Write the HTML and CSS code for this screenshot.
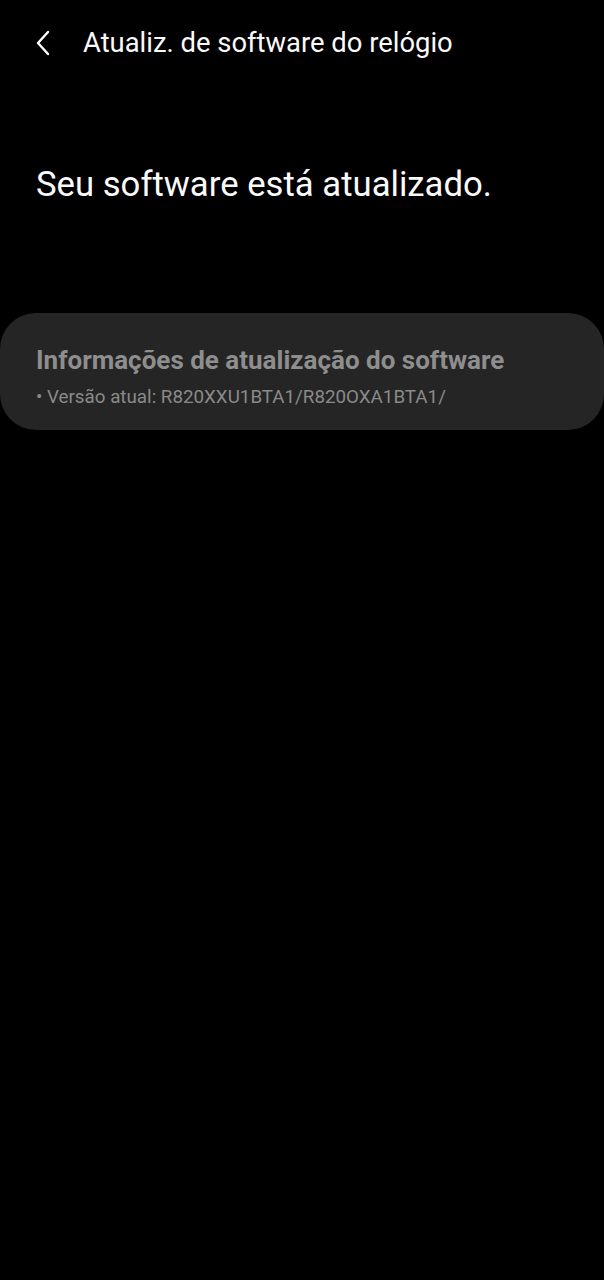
FILE: index.html
```html
<!DOCTYPE html>
<html lang="pt">
<head>
  <meta charset="UTF-8">
  <title>Atualiz. de software do relógio</title>
  <meta name="viewport" content="width=device-width, initial-scale=1">
  <link rel="stylesheet" href="styles.css">
</head>
<body>

  <div class="header">
    <button class="back" aria-label="Voltar">
      <svg width="16" height="26" viewBox="0 0 16 26">
        <path d="M13 2 L3 13 L13 24" fill="none" stroke="#fff" stroke-width="2.4" stroke-linecap="round" stroke-linejoin="round"/>
      </svg>
    </button>
    <h1>Atualiz. de software do relógio</h1>
  </div>

  <p class="status">Seu software está atualizado.</p>

  <div class="card">
    <h2>Informações de atualização do software</h2>
    <p>• Versão atual: R820XXU1BTA1/R820OXA1BTA1/</p>
  </div>

</body>
</html>
```

FILE: styles.css
```css
body {
  margin: 0;
  background-color: #000;
  color: #fafafa;
  font-family: Roboto, "Noto Sans", sans-serif;
}

.header {
  display: flex;
  align-items: center;
  height: 86px;
  padding-left: 35px;
}

.back {
  background: none;
  border: none;
  padding: 0;
  width: 28px;
  height: 28px;
  display: flex;
  align-items: center;
  margin-right: 20px;
}

.header h1 {
  margin: 0;
  font-size: 27.4px;
  font-weight: 400;
}

.status {
  margin: 78px 0 0 36px;
  font-size: 34.7px;
  font-weight: 400;
}

.card {
  margin-top: 109px;
  background-color: #252525;
  border-radius: 36px;
  padding: 31px 36px 21px;
}

.card h2 {
  margin: 0;
  font-size: 26px;
  line-height: 32px;
  font-weight: 700;
  color: #8e8e8e;
}

.card p {
  margin: 9px 0 0;
  font-size: 18.8px;
  line-height: 24px;
  color: #8a8a8a;
}
```
